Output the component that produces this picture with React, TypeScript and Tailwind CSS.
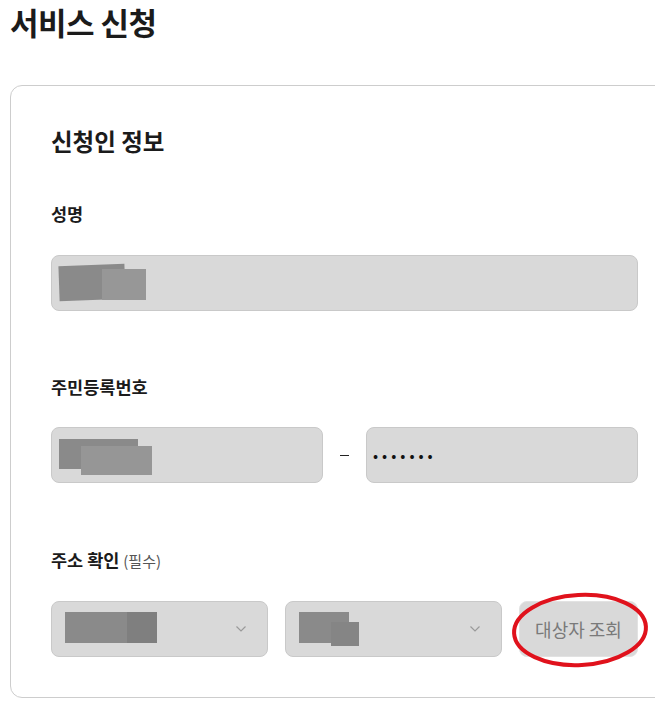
function Blot({ className }: { className: string }) {
  return <div className={`absolute ${className}`} />;
}

function Chevron() {
  return (
    <svg width="12" height="8" viewBox="0 0 12 8" className="text-[#9a9a9a]">
      <path d="M1.5 1.5 L6 6 L10.5 1.5" fill="none" stroke="currentColor" strokeWidth="1.2" />
    </svg>
  );
}

export default function App() {
  const field =
    "relative h-[56px] rounded-lg border border-[#c9c9c9] bg-[#d9d9d9]";

  return (
    <div
      className="w-[655px] h-[705px] overflow-hidden bg-white text-[#1b1b1b]"
      style={{ fontFamily: '"Noto Sans CJK KR", "Noto Sans", sans-serif' }}
    >
      <h1 className="pl-[10px] text-[31px] leading-[44px] font-bold tracking-[-0.5px]">
        서비스 신청
      </h1>

      <div className="ml-[10px] mt-[41px] w-[669px] rounded-xl border border-[#cdcdcd] px-[40px] pt-[40px] pb-[40px]">
        <h2 className="text-[23.5px] leading-[30px] font-bold">신청인 정보</h2>

        <div className="mt-[46px] text-[17.5px] leading-[24px] font-bold">성명</div>
        <div className={`mt-[29px] ${field}`}>
          <Blot className="left-[7px] top-[9px] w-[66px] h-[35px] bg-[#8a8a8a] -rotate-2" />
          <Blot className="left-[50px] top-[13px] w-[44px] h-[31px] bg-[#979797]" />
        </div>

        <div className="mt-[64px] text-[17.5px] leading-[24px] font-bold">주민등록번호</div>
        <div className="mt-[28px] grid grid-cols-[1fr_43px_1fr] items-center">
          <div className={field}>
            <Blot className="left-[7px] top-[11px] w-[79px] h-[30px] bg-[#8a8a8a]" />
            <Blot className="left-[29px] top-[18px] w-[71px] h-[29px] bg-[#969696]" />
          </div>
          <div className="flex justify-center">
            <div className="w-[9px] h-px bg-[#222]" />
          </div>
          <div className={`${field} flex items-center pl-[6px]`}>
            <span className="text-[15px] tracking-[4px] text-[#111]">•••••••</span>
          </div>
        </div>

        <div className="mt-[65px] text-[17.5px] leading-[24px]">
          <span className="font-bold">주소 확인</span>{" "}
          <span className="text-[15px] text-[#555]">(필수)</span>
        </div>
        <div className="mt-[28px] flex gap-[17px]">
          <div className={`${field} w-[217px] flex items-center justify-end pr-[20px]`}>
            <Blot className="left-[13px] top-[10px] w-[72px] h-[31px] bg-[#8a8a8a]" />
            <Blot className="left-[75px] top-[10px] w-[30px] h-[31px] bg-[#7f7f7f]" />
            <Chevron />
          </div>
          <div className={`${field} w-[217px] flex items-center justify-end pr-[20px]`}>
            <Blot className="left-[13px] top-[10px] w-[50px] h-[31px] bg-[#8a8a8a]" />
            <Blot className="left-[45px] top-[20px] w-[28px] h-[24px] bg-[#858585]" />
            <Chevron />
          </div>
          <div className="relative flex-1">
            <button className="w-full h-[56px] rounded-lg border border-[#e2e2e2] bg-[#d9d9d9] text-[18px] text-[#7a7a7a]">
              대상자 조회
            </button>
            <svg
              className="absolute left-[-9px] top-[-10px] pointer-events-none"
              width="140"
              height="78"
              viewBox="0 0 140 78"
            >
              <ellipse
                cx="70"
                cy="39"
                rx="66"
                ry="35"
                fill="none"
                stroke="#e0121c"
                strokeWidth="4"
                transform="rotate(-3 70 39)"
              />
            </svg>
          </div>
        </div>
      </div>
    </div>
  );
}
